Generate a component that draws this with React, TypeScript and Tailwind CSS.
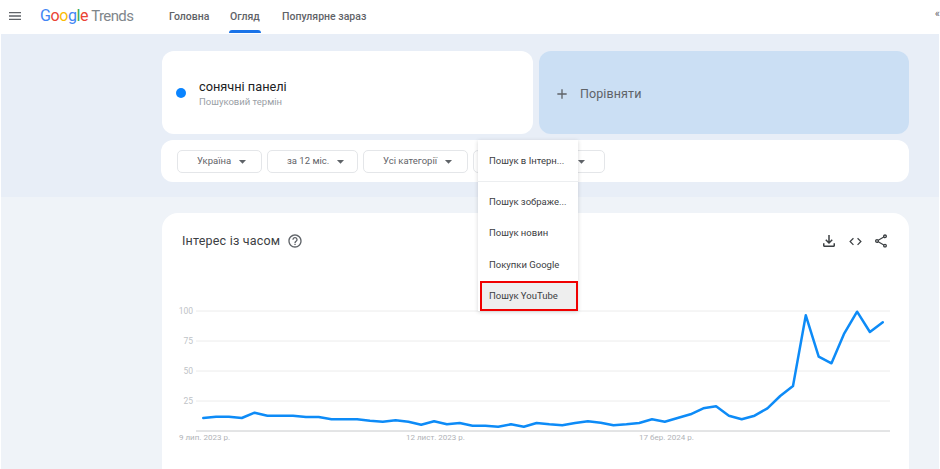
import { MdMenu, MdAdd, MdArrowDropDown, MdHelpOutline, MdOutlineFileDownload, MdCode, MdOutlineShare } from 'react-icons/md';

const font = { fontFamily: 'Roboto, "Noto Sans", sans-serif' };

// traced from the reference, real page coords
const xs = Array.from({ length: 54 }, (_, i) => 41.3 + i * 12.82);
const ys = [418, 416.7, 416.7, 418, 412.7, 415.7, 415.7, 415.7, 417, 417, 419.3, 419.3, 419.3, 420.7, 421.7, 420.3, 421.7, 424.7, 421.3, 424.3, 423, 425.7, 425.7, 426.7, 424.3, 426.7, 423, 424.3, 425.3, 423, 421.3, 422.7, 425.3, 424.3, 423, 419.3, 421.7, 418, 414.3, 408.3, 406.3, 415.7, 419.3, 415.7, 408.3, 396, 386, 315.3, 356.7, 363.3, 333.3, 311.7, 332, 322.3];
const top = 300;
const line = xs.map((x, i) => `${x.toFixed(1)},${(ys[i] - top).toFixed(1)}`).join(' ');

const grid = [
  { label: '100', y: 11 },
  { label: '75', y: 41 },
  { label: '50', y: 71 },
  { label: '25', y: 101 },
];

const dates = [
  { label: '9 лип. 2023 р.', x: 17 },
  { label: '12 лист. 2023 р.', x: 244 },
  { label: '17 бер. 2024 р.', x: 477 },
];

function Filter({ label, w }: { label: string; w: string }) {
  return (
    <div className={`${w} h-[23px] flex items-center pl-[19px] border border-[#e4e6e9] rounded-[5px] bg-white shrink-0`}>
      <span className="text-[9.5px] text-[#5f6368]">{label}</span>
      <MdArrowDropDown size={17} className="text-[#5f6368] ml-[3px]" />
    </div>
  );
}

export default function App() {
  return (
    <div className="w-[940px] h-[469px] overflow-hidden bg-white" style={font}>
      <header className="h-[34px] flex items-center relative">
        <MdMenu size={16} className="ml-[7px] -mt-[3px] text-[#5f6368]" />
        <div className="ml-[17px] w-[129px] flex items-baseline text-[16px] leading-none tracking-[-0.4px] -mt-[3px]">
          <span className="text-[#4285f4]">G</span>
          <span className="text-[#ea4335]">o</span>
          <span className="text-[#fbbc05]">o</span>
          <span className="text-[#4285f4]">g</span>
          <span className="text-[#34a853]">l</span>
          <span className="text-[#ea4335]">e</span>
          <span className="ml-[3px] text-[15px] tracking-[-0.6px] text-[#80868b]">Trends</span>
        </div>
        <nav className="flex items-center text-[10.5px] font-medium text-[#5f6368]">
          <span className="w-[61px]">Головна</span>
          <span className="w-[52px] relative">
            Огляд
            <span className="absolute -left-px top-[21px] w-[32px] h-[3px] bg-[#1a73e8] rounded-t-[3px]" />
          </span>
          <span>Популярне зараз</span>
        </nav>
        <span className="absolute right-0 top-[6px] text-[11px] text-[#5f6368]">«</span>
      </header>

      <div className="mx-px bg-[#e8eef7] h-[163px] pt-[17px] pl-[161px]">
        <div className="flex gap-[6px] w-[747px]">
          <div className="w-[371px] h-[83px] bg-white rounded-[12px] flex items-center pl-[14px]">
            <span className="w-[10px] h-[10px] rounded-full bg-[#0a84ff]" />
            <div className="ml-[13px]">
              <div className="text-[12.75px] leading-[17px] text-[#202124]">сонячні панелі</div>
              <div className="text-[9.5px] leading-[13px] text-[#9aa0a6]">Пошуковий термін</div>
            </div>
          </div>
          <div className="w-[370px] h-[83px] bg-[#cbdff4] rounded-[12px] flex items-center pl-[15px] pt-[3px]">
            <MdAdd size={16} className="text-[#5f6368]" />
            <span className="ml-[10px] text-[12.5px] text-[#5f6368] tracking-[0.1px]">Порівняти</span>
          </div>
        </div>
        <div className="relative w-[748px] -ml-px mt-[6px] h-[42px] bg-white rounded-[12px] flex items-center pl-[16px] gap-[5px]">
          <Filter label="Україна" w="w-[85px]" />
          <Filter label="за 12 міс." w="w-[91px]" />
          <Filter label="Усі категорії" w="w-[105px]" />
          <div className="w-[132px] h-[23px] flex items-center justify-end pr-[14px] border border-[#e4e6e9] rounded-[5px] shrink-0">
            <MdArrowDropDown size={17} className="text-[#5f6368]" />
          </div>
          <div className="absolute left-[317px] top-0 w-[100px] h-[171px] bg-white z-10 shadow-[0_1px_4px_rgba(60,64,67,0.22)] text-[9.5px] text-[#3c4043]">
            <div className="h-[41px] flex items-center pl-[11px] pt-[1px]">Пошук в Інтерн...</div>
            <div className="border-t border-[#eceef0] pt-[5px]">
              <div className="h-[31px] flex items-center pl-[11px]">Пошук зображе...</div>
              <div className="h-[31px] flex items-center pl-[11px]">Пошук новин</div>
              <div className="h-[32px] flex items-center pl-[11px]">Покупки Google</div>
              <div className="h-[30px] ml-[2px] w-[98px] border-2 border-[#f00000] bg-[#eeeeee] flex items-center pl-[7px]">Пошук YouTube</div>
            </div>
          </div>
        </div>
      </div>

      <div className="mx-px bg-[#eff3f8] h-[272px] pt-[16px] pl-[161px]">
        <section className="w-[747px] h-[256px] bg-white rounded-t-[16px] pt-[18px]">
          <div className="h-[20px] flex items-center pl-[20px] pr-[20px]">
            <h2 className="text-[12.5px] text-[#3c4043] tracking-[0.2px]">Інтерес із часом</h2>
            <MdHelpOutline size={16} className="ml-[7px] text-[#5f6368]" />
            <div className="ml-auto flex items-center gap-[10px] text-[#3c4043]">
              <MdOutlineFileDownload size={18} />
              <MdCode size={15} />
              <MdOutlineShare size={16} />
            </div>
          </div>
          <svg width="747" height="169" className="mt-[49px] block">
            {grid.map(g => (
              <g key={g.label}>
                <line x1="34" x2="728" y1={g.y} y2={g.y} stroke="#ececec" />
                <text x="31" y={g.y + 3} textAnchor="end" fontSize="8.5" fill="#c0c3c7">{g.label}</text>
              </g>
            ))}
            <line x1="34" x2="728" y1="131" y2="131" stroke="#c8cacc" />
            {dates.map(d => (
              <text key={d.label} x={d.x} y="140" fontSize="8" fill="#b0b3b7">{d.label}</text>
            ))}
            <polyline points={line} fill="none" stroke="#0d8bf7" strokeWidth="2.5" strokeLinejoin="round" strokeLinecap="round" />
          </svg>
        </section>
      </div>
    </div>
  );
}
